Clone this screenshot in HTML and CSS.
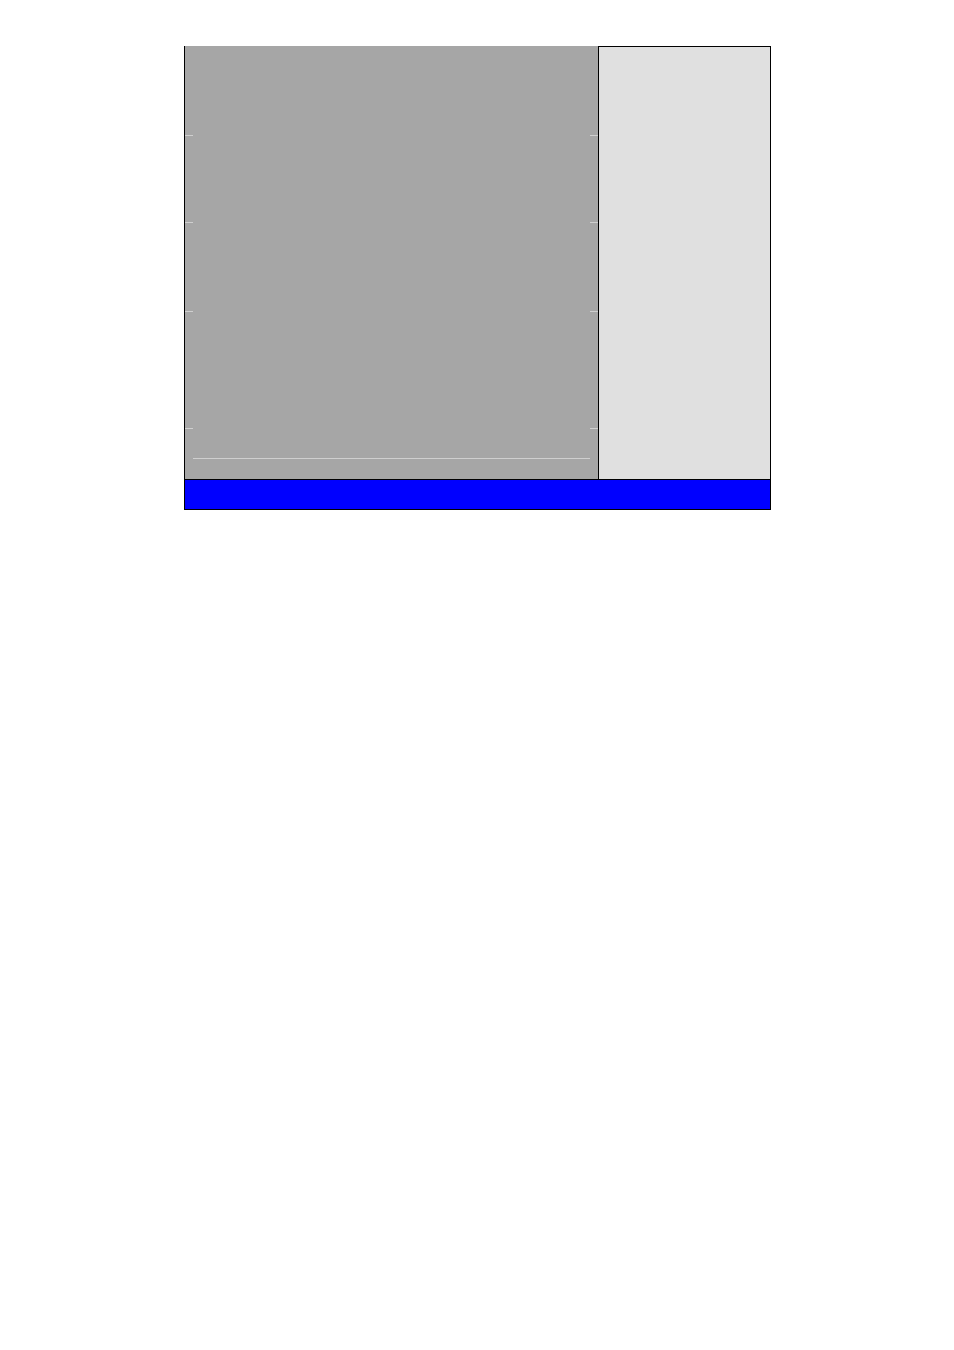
FILE: index.html
```html
<!DOCTYPE html>
<html lang="en">
<head>
<meta charset="utf-8">
<title>Monitor</title>
<link rel="stylesheet" href="styles.css">
</head>
<body>
  <div class="frame">
    <div class="main">
      <div class="plot">
        <svg class="grid" width="413" height="433" viewBox="0 0 413 433">
          <g stroke="#cfcfcf" stroke-width="1">
            <line x1="0" y1="89.5" x2="8" y2="89.5"/>
            <line x1="0" y1="176.5" x2="8" y2="176.5"/>
            <line x1="0" y1="265.5" x2="8" y2="265.5"/>
            <line x1="0" y1="382.5" x2="8" y2="382.5"/>
            <line x1="405" y1="89.5" x2="413" y2="89.5"/>
            <line x1="405" y1="176.5" x2="413" y2="176.5"/>
            <line x1="405" y1="265.5" x2="413" y2="265.5"/>
            <line x1="405" y1="382.5" x2="413" y2="382.5"/>
            <line x1="8" y1="412.5" x2="405" y2="412.5"/>
          </g>
        </svg>
      </div>
      <div class="side"></div>
    </div>
    <div class="status"></div>
  </div>
</body>
</html>
```
FILE: styles.css
```css
html, body {
  margin: 0;
  padding: 0;
  background: #ffffff;
}

.frame {
  margin: 46px 0 0 184px;
  width: 587px;
}

.main {
  display: flex;
  height: 433px;
}

.plot {
  width: 413px;
  border-left: 1px solid #000;
  background: #a6a6a6;
}

.grid {
  display: block;
}

.side {
  flex: 1;
  border: 1px solid #000;
  border-bottom: none;
  background: #e0e0e0;
}

.status {
  height: 29px;
  border: 1px solid #000;
  background: #0000ff;
}
```
